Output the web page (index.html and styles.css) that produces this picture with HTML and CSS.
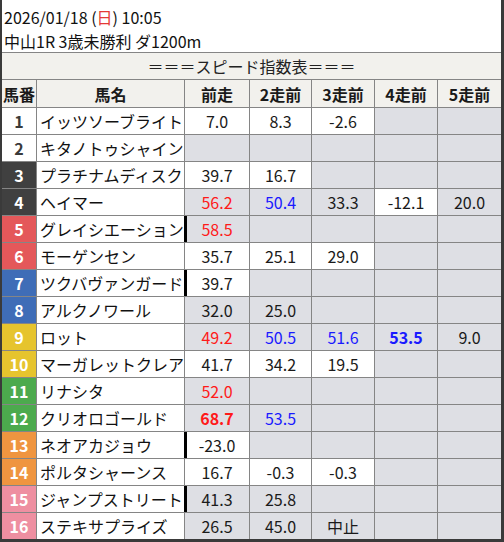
FILE: index.html
```html
<!DOCTYPE html>
<html lang="ja">
<head>
<meta charset="utf-8">
<title>スピード指数表</title>
<link rel="stylesheet" href="styles.css">
</head>
<body>
<div class="frame">
  <div class="info">
    <div>2026/01/18 (<span class="sun">日</span>) 10:05</div>
    <div>中山1R 3歳未勝利 ダ1200m</div>
  </div>
  <div class="grid">
    <div class="title">＝＝＝スピード指数表＝＝＝</div>
    <div class="hd">馬番</div><div class="hd">馬名</div><div class="hd">前走</div><div class="hd">2走前</div><div class="hd">3走前</div><div class="hd">4走前</div><div class="hd">5走前</div>

    <div class="no w1">1</div><div class="nm">イッツソーブライト</div><div class="v">7.0</div><div class="v">8.3</div><div class="v">-2.6</div><div class="v g"></div><div class="v g"></div>
    <div class="no w1">2</div><div class="nm">キタノトゥシャイン</div><div class="v g"></div><div class="v g"></div><div class="v g"></div><div class="v g"></div><div class="v g"></div>
    <div class="no k">3</div><div class="nm">プラチナムディスク</div><div class="v">39.7</div><div class="v">16.7</div><div class="v g"></div><div class="v g"></div><div class="v g"></div>
    <div class="no k">4</div><div class="nm">ヘイマー</div><div class="v g red">56.2</div><div class="v g blue">50.4</div><div class="v g">33.3</div><div class="v">-12.1</div><div class="v g">20.0</div>
    <div class="no r">5</div><div class="nm">グレイシエーション</div><div class="v g red mark">58.5</div><div class="v g"></div><div class="v g"></div><div class="v g"></div><div class="v g"></div>
    <div class="no r">6</div><div class="nm">モーゲンセン</div><div class="v">35.7</div><div class="v">25.1</div><div class="v">29.0</div><div class="v g"></div><div class="v g"></div>
    <div class="no b">7</div><div class="nm">ツクバヴァンガード</div><div class="v mark">39.7</div><div class="v g"></div><div class="v g"></div><div class="v g"></div><div class="v g"></div>
    <div class="no b">8</div><div class="nm">アルクノワール</div><div class="v g">32.0</div><div class="v g">25.0</div><div class="v g"></div><div class="v g"></div><div class="v g"></div>
    <div class="no y">9</div><div class="nm">ロット</div><div class="v g red">49.2</div><div class="v g blue">50.5</div><div class="v g blue">51.6</div><div class="v g blue bold">53.5</div><div class="v g">9.0</div>
    <div class="no y">10</div><div class="nm">マーガレットクレア</div><div class="v">41.7</div><div class="v">34.2</div><div class="v">19.5</div><div class="v g"></div><div class="v g"></div>
    <div class="no gr">11</div><div class="nm">リナシタ</div><div class="v g red">52.0</div><div class="v g"></div><div class="v g"></div><div class="v g"></div><div class="v g"></div>
    <div class="no gr">12</div><div class="nm">クリオロゴールド</div><div class="v g red bold">68.7</div><div class="v g blue">53.5</div><div class="v g"></div><div class="v g"></div><div class="v g"></div>
    <div class="no o">13</div><div class="nm">ネオアカジョウ</div><div class="v mark">-23.0</div><div class="v g"></div><div class="v g"></div><div class="v g"></div><div class="v g"></div>
    <div class="no o">14</div><div class="nm">ポルタシャーンス</div><div class="v">16.7</div><div class="v">-0.3</div><div class="v">-0.3</div><div class="v g"></div><div class="v g"></div>
    <div class="no p">15</div><div class="nm">ジャンプストリート</div><div class="v g mark">41.3</div><div class="v g">25.8</div><div class="v g"></div><div class="v g"></div><div class="v g"></div>
    <div class="no p">16</div><div class="nm">ステキサプライズ</div><div class="v g">26.5</div><div class="v g">45.0</div><div class="v g">中止</div><div class="v g"></div><div class="v g"></div>
  </div>
</div>
</body>
</html>
```
FILE: styles.css
```css
html, body {
  margin: 0;
  padding: 0;
  background: #ffffff;
}
body {
  font-family: "Noto Sans CJK JP", "Noto Sans", sans-serif;
  color: #222222;
}
.frame {
  width: 504px;
  height: 542px;
  box-sizing: border-box;
  border-left: 2px solid #3a3a3a;
  border-right: 3px solid #3a3a3a;
  border-bottom: 3px solid #3a3a3a;
  background: #ffffff;
  overflow: hidden;
}
.info {
  height: 52px;
  box-sizing: border-box;
  padding: 5px 0 0 2px;
  font-size: 16px;
  line-height: 24px;
  color: #111111;
}
.sun {
  color: #e53935;
}
.grid {
  display: grid;
  grid-template-columns: 34px 147px 64px 61px 62px 62px 63px;
  grid-template-rows: 26px 27px repeat(16, 26px);
  gap: 1px;
  background: #858585;
  border-top: 1px solid #858585;
}
.grid > div {
  display: flex;
  align-items: center;
  justify-content: center;
  font-size: 16px;
  line-height: 1;
  white-space: nowrap;
  overflow: hidden;
}
.title {
  grid-column: 1 / -1;
  background: #f2f1ed;
  color: #222222;
}
.hd {
  background: #f2f1ed;
  font-weight: bold;
  color: #1a1a1a;
}
.no {
  font-weight: bold;
  color: #ffffff;
}
.no.w1 { background: #ffffff; color: #3a3a3a; }
.no.k { background: #404040; }
.no.r { background: #e4585a; }
.no.b { background: #3f6db7; }
.no.y { background: #e6c42e; }
.no.gr { background: #4caa4d; }
.no.o { background: #ef9540; }
.no.p { background: #ee8fa1; }
.grid > .nm {
  justify-content: flex-start;
  padding-left: 3px;
  background: #ffffff;
  color: #111111;
}
.v {
  background: #ffffff;
  color: #1a1a1a;
}
.v.g { background: #dedfe4; }
.v.red { color: #ff1a1a; }
.v.blue { color: #1a1aff; }
.v.bold { font-weight: bold; }
.v.mark {
  box-shadow: -1px 0 0 #000000, inset 2px 0 0 #000000;
}
```
